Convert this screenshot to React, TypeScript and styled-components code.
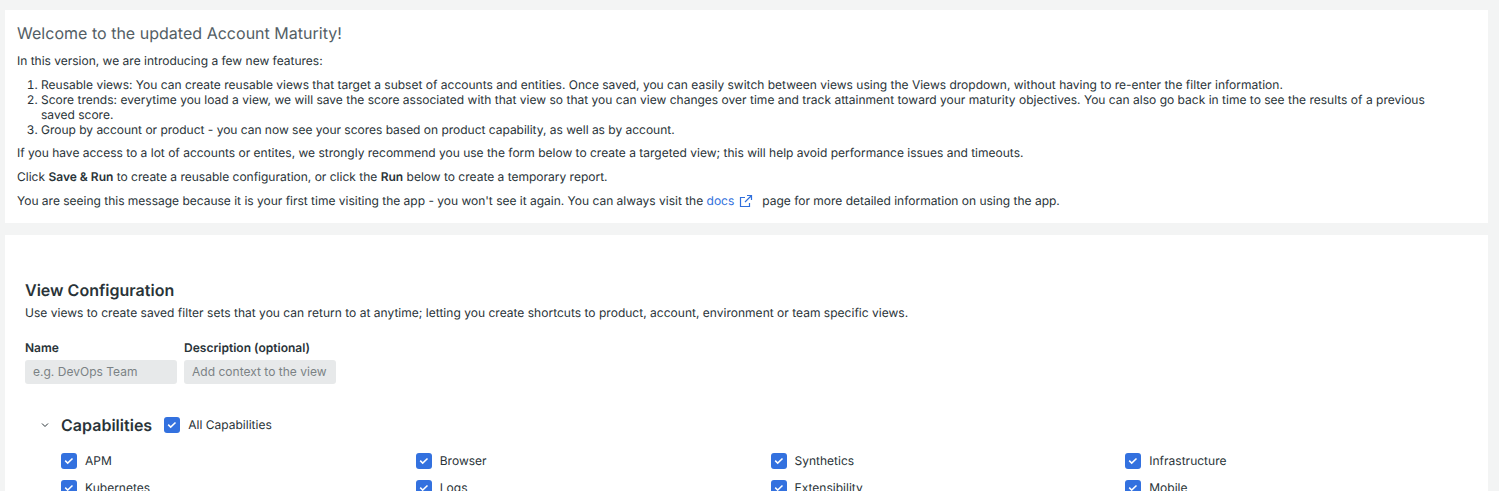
import React from "react";
import styled, { createGlobalStyle } from "styled-components";

const Global = createGlobalStyle`
  * { box-sizing: border-box; }
  html, body { margin: 0; height: 100%; overflow: hidden; }
  body {
    background: #f3f4f4; color: #293338; font: 12px/16px Inter, "Liberation Sans", sans-serif;
    letter-spacing: 0.012px; text-rendering: geometricPrecision;
  }
`;
const Page = styled.main`
  display: flex; flex-direction: column; gap: 12px;
  height: 491px; padding: 10px 11px 0 5px; overflow: hidden;
`;
const Banner = styled.section`
  flex: none; height: 213px; padding: 12px; background: #fff;
`;
const Title = styled.h1`
  margin: 0 0 8px; font-size: 16px; line-height: 23px; font-weight: 400; letter-spacing: 0.02px; color: #535e65;
`;
const Paragraph = styled.p<{ $tracking?: number }>`
  margin: 0 0 8px; line-height: 16px; white-space: nowrap; letter-spacing: ${p => p.$tracking ?? 0}px;
`;
const Intro = styled(Paragraph)`
  margin: 5px 0 0;
`;
const List = styled.ol`
  margin: 0 0 8px; padding-left: 24px; line-height: 15px;
`;
const Item = styled.li<{ $tracking: number }>`
  letter-spacing: ${p => p.$tracking}px;
`;
const Strong = styled.b`
  font-weight: 600;
`;
const DocsLink = styled.a`
  display: inline-flex; align-items: center; gap: 5px; height: 16px; margin-right: 9px;
  vertical-align: top; color: #2f6fdc; text-decoration: none;
`;
const Panel = styled.section`
  flex: none; height: 400px; padding: 45px 20px 0; background: #fff;
`;
const Heading = styled.h2`
  margin: 0; font-size: 16px; line-height: 20px; font-weight: 600; letter-spacing: 0.02px;
`;
const Fields = styled.div`
  display: flex; gap: 7px; margin-top: 19px;
`;
const Field = styled.label`
  display: flex; flex-direction: column; gap: 4px; width: 152px; line-height: 16px; font-weight: 600;
`;
const Input = styled.input`
  width: 152px; height: 24px; padding: 0 8px 1px; border: 0; border-radius: 3px; background: #e7e9ea;
  font: 12px Inter, sans-serif; letter-spacing: 0.02px; color: #293338;
  &::placeholder { color: #7b8285; opacity: 1; }
`;
const SectionHeader = styled.div`
  display: flex; align-items: center; height: 20px; margin: 31px 0 0 16px;
`;
const Chevron = styled.svg`
  width: 8px; height: 8px; margin-right: 12px;
`;
const Options = styled.div`
  display: grid; grid-template-columns: repeat(4, 354.75px); row-gap: 11px; margin: 18px 0 0 36px;
`;
const CheckLabel = styled.label<{ $inset?: boolean }>`
  display: flex; align-items: center; gap: 8px; height: 16px; margin-left: ${p => (p.$inset ? 12 : 0)}px;
`;
const Box = styled.span`
  display: grid; place-items: center; width: 16px; height: 16px; border-radius: 3px; background: #3371df;
`;

function Checkbox({ label, inset }: { label: string; inset?: boolean }) {
  return (
    <CheckLabel $inset={inset}>
      <Box>
        <svg width="16" height="16" fill="none" stroke="#fff" strokeWidth="1.5"><path d="m4.2 7.6 2.5 2.5 4.8-4.6" /></svg>
      </Box>
      {label}
    </CheckLabel>
  );
}

const capabilities = ["APM", "Browser", "Synthetics", "Infrastructure", "Kubernetes", "Logs", "Extensibility", "Mobile"];

export default function App() {
  return (
    <>
      <Global />
      <Page>
        <Banner>
          <Title>Welcome to the updated Account Maturity!</Title>
          <Paragraph $tracking={-0.005}>In this version, we are introducing a few new features:</Paragraph>
          <List>
            <Item $tracking={0.006}>Reusable views: You can create reusable views that target a subset of accounts and entities. Once saved, you can easily switch between views using the Views dropdown, without having to re-enter the filter information.</Item>
            <Item $tracking={0.01}>Score trends: everytime you load a view, we will save the score associated with that view so that you can view changes over time and track attainment toward your maturity objectives. You can also go back in time to see the results of a previous<br />saved score.</Item>
            <Item $tracking={-0.015}>Group by account or product - you can now see your scores based on product capability, as well as by account.</Item>
          </List>
          <Paragraph>If you have access to a lot of accounts or entites, we strongly recommend you use the form below to create a targeted view; this will help avoid performance issues and timeouts.</Paragraph>
          <Paragraph>Click <Strong>Save &amp; Run</Strong> to create a reusable configuration, or click the <Strong>Run</Strong> below to create a temporary report.</Paragraph>
          <Paragraph $tracking={-0.008}>
            You are seeing this message because it is your first time visiting the app - you won't see it again. You can always visit the{" "}
            <DocsLink>
              docs
              <svg width="14" height="14" fill="none" stroke="currentColor" strokeWidth="1.2"><path d="M6 3.5H1.5v9h9V9M8 1.5h4.5V6M12.5 1.5 6 8" /></svg>
            </DocsLink>
            page for more detailed information on using the app.
          </Paragraph>
        </Banner>
        <Panel>
          <Heading>View Configuration</Heading>
          <Intro $tracking={0.018}>Use views to create saved filter sets that you can return to at anytime; letting you create shortcuts to product, account, environment or team specific views.</Intro>
          <Fields>
            <Field>Name<Input placeholder="e.g. DevOps Team" /></Field>
            <Field>Description (optional)<Input placeholder="Add context to the view" /></Field>
          </Fields>
          <SectionHeader>
            <Chevron fill="none" stroke="#293338"><path d="m1 2.5 3 3 3-3" /></Chevron>
            <Heading>Capabilities</Heading>
            <Checkbox inset label="All Capabilities" />
          </SectionHeader>
          <Options>{capabilities.map(c => <Checkbox key={c} label={c} />)}</Options>
        </Panel>
      </Page>
    </>
  );
}
